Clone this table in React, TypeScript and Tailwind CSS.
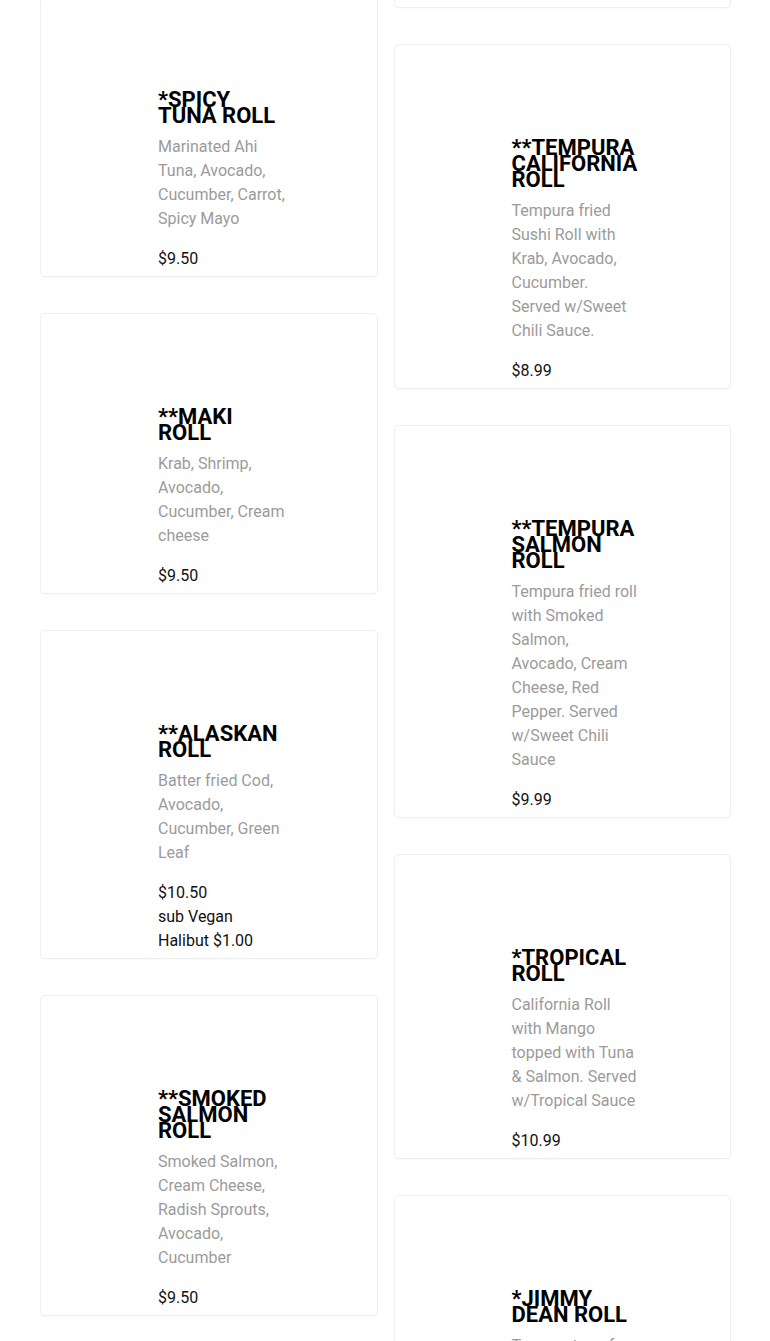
import React from "react";

interface MenuItem {
  name: string;
  description: string;
  price: string[];
}

const leftItems: MenuItem[] = [
  {
    name: "*Spicy Tuna Roll",
    description: "Marinated Ahi Tuna, Avocado, Cucumber, Carrot, Spicy Mayo",
    price: ["$9.50"],
  },
  {
    name: "**Maki Roll",
    description: "Krab, Shrimp, Avocado, Cucumber, Cream cheese",
    price: ["$9.50"],
  },
  {
    name: "**Alaskan Roll",
    description: "Batter fried Cod, Avocado, Cucumber, Green Leaf",
    price: ["$10.50", "sub Vegan Halibut $1.00"],
  },
  {
    name: "**Smoked Salmon Roll",
    description: "Smoked Salmon, Cream Cheese, Radish Sprouts, Avocado, Cucumber",
    price: ["$9.50"],
  },
];

const rightItems: MenuItem[] = [
  {
    name: "**Crunchy Roll",
    description: "Krab, Avocado, Cucumber",
    price: ["$9.50"],
  },
  {
    name: "**Tempura California Roll",
    description:
      "Tempura fried Sushi Roll with Krab, Avocado, Cucumber. Served w/Sweet Chili Sauce.",
    price: ["$8.99"],
  },
  {
    name: "**Tempura Salmon Roll",
    description:
      "Tempura fried roll with Smoked Salmon, Avocado, Cream Cheese, Red Pepper. Served w/Sweet Chili Sauce",
    price: ["$9.99"],
  },
  {
    name: "*Tropical Roll",
    description:
      "California Roll with Mango topped with Tuna & Salmon. Served w/Tropical Sauce",
    price: ["$10.99"],
  },
  {
    name: "*Jimmy Dean Roll",
    description: "Tuna on top of a California Roll with Spicy Mayo and Eel Sauce",
    price: ["$11.50"],
  },
];

const MenuCard: React.FC<{ item: MenuItem; narrow?: boolean }> = ({ item, narrow }) => (
  <div className="bg-white border border-[#efefef] rounded-[5px] shadow-[0_1px_3px_rgba(0,0,0,0.03)] pt-[95px] pb-[5px] pl-[117px]">
    <div className={narrow ? "w-[125.5px]" : "w-[128px]"}>
      <h3 className="text-[22px] leading-4 font-bold uppercase text-black mb-[11px]">
        {item.name}
      </h3>
      <p className="text-base leading-6 text-[#9b9b9b] mb-4">{item.description}</p>
      {item.price.map((p) => (
        <p key={p} className="text-base leading-6 text-[#111]">
          {p}
        </p>
      ))}
    </div>
  </div>
);

export default function App() {
  return (
    <div
      className="min-h-[1341px] bg-white overflow-hidden"
      style={{ fontFamily: "Roboto, 'Liberation Sans', sans-serif" }}
    >
      <div className="grid grid-cols-2 gap-x-4 pl-10 pr-[39px] items-start">
        <div className="flex flex-col gap-9 -mt-[4px]">
          {leftItems.map((item) => (
            <MenuCard key={item.name} item={item} />
          ))}
        </div>
        <div className="flex flex-col gap-9 -mt-[225px]">
          {rightItems.map((item) => (
            <MenuCard key={item.name} item={item} narrow />
          ))}
        </div>
      </div>
    </div>
  );
}
